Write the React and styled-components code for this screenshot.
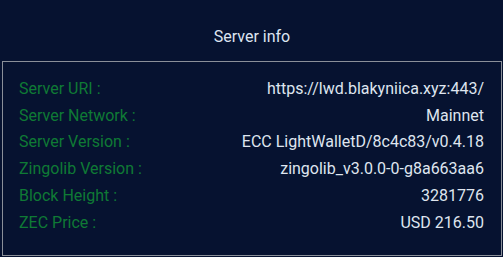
import React from 'react'
import styled, { createGlobalStyle } from 'styled-components'

const GlobalStyle = createGlobalStyle`
  html, body {
    margin: 0;
    padding: 0;
    background: #061230;
  }
  body {
    font-family: Roboto, "Liberation Sans", sans-serif;
  }
`

const Screen = styled.div`
  width: 503px;
  height: 257px;
  background: #061230;
  display: flex;
  flex-direction: column;
  box-sizing: border-box;
  padding: 0 1px 1px 2px;
`

const Title = styled.div`
  height: 61px;
  display: flex;
  align-items: center;
  justify-content: center;
  padding-top: 11px;
  box-sizing: border-box;
  color: #dde4f0;
  font-size: 16px;
`

const Box = styled.div`
  flex: 1;
  border: 1px solid #8a8f99;
  padding: 13px 17px 0 16px;
  display: flex;
  flex-direction: column;
`

const Row = styled.div`
  display: flex;
  justify-content: space-between;
  align-items: center;
  height: 26.8px;
  font-size: 16px;
`

const Label = styled.span`
  color: #0f7a35;
`

const Value = styled.span`
  color: #dfe5ef;
`

const rows = [
  ['Server URI :', 'https://lwd.blakyniica.xyz:443/'],
  ['Server Network :', 'Mainnet'],
  ['Server Version :', 'ECC LightWalletD/8c4c83/v0.4.18'],
  ['Zingolib Version :', 'zingolib_v3.0.0-0-g8a663aa6'],
  ['Block Height :', '3281776'],
  ['ZEC Price :', 'USD 216.50'],
]

function App() {
  return (
    <>
      <GlobalStyle />
      <Screen>
        <Title>Server info</Title>
        <Box>
          {rows.map(([label, value]) => (
            <Row key={label}>
              <Label>{label}</Label>
              <Value>{value}</Value>
            </Row>
          ))}
        </Box>
      </Screen>
    </>
  )
}

export default App
